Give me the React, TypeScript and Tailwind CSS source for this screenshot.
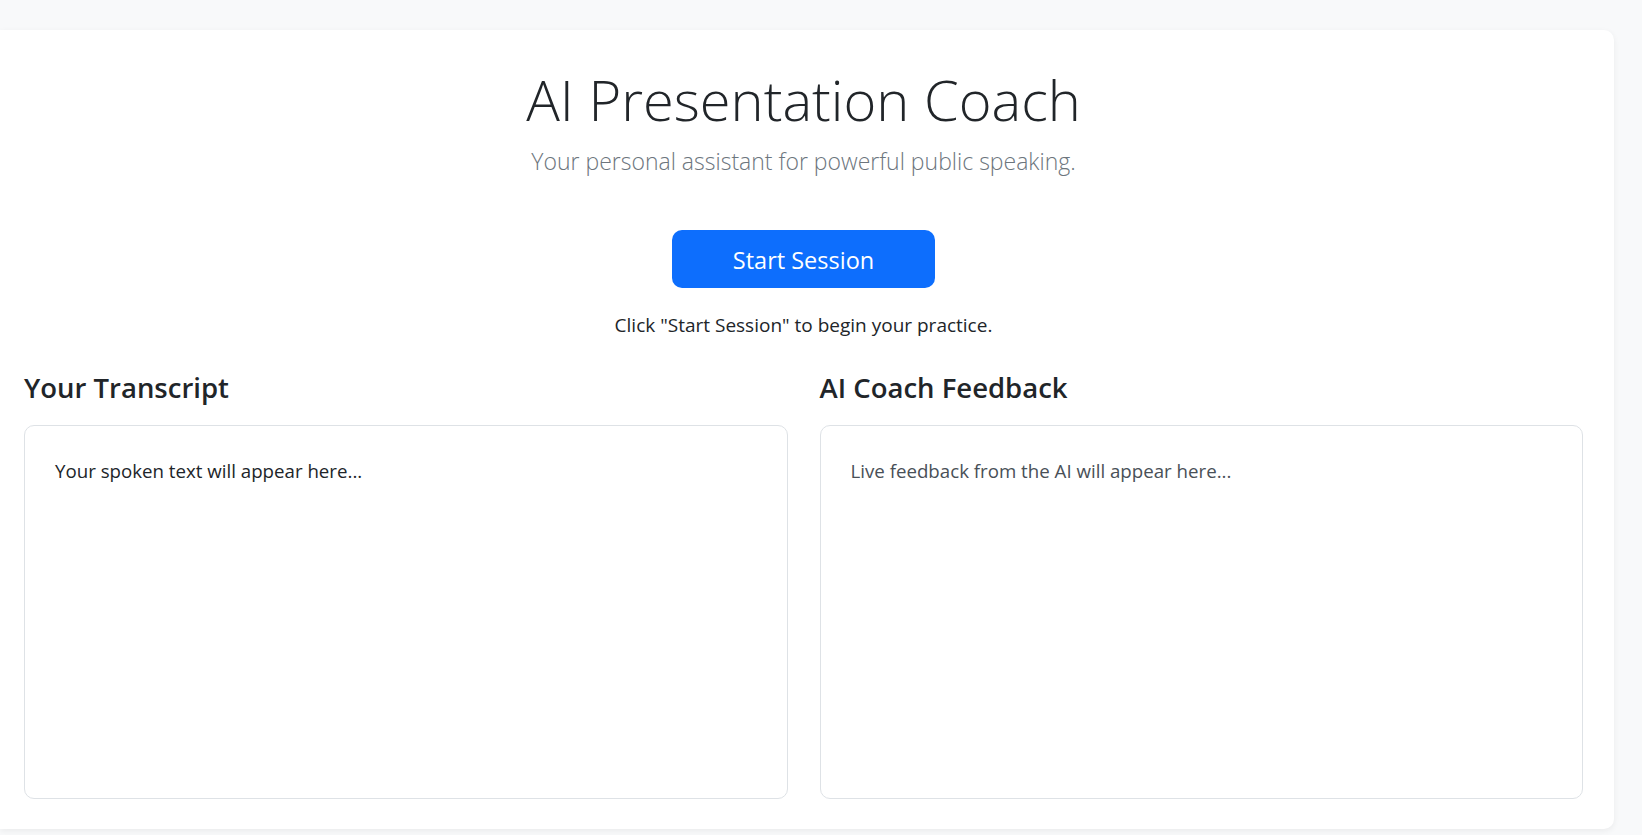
import React from 'react';

const App = () => {
  return (
    <div className="min-h-screen bg-[#f8f9fa] pt-[30px] font-['Open_Sans',sans-serif] text-[#212529]">
      <div className="w-[1614px] rounded-r-[10px] bg-white pl-6 pr-[31px] pt-[33px] pb-[30px] shadow-[0_2px_6px_rgba(0,0,0,0.06)]">
        {/* Header */}
        <div className="text-center">
          <h1 className="text-[56px] font-light leading-[72px]">AI Presentation Coach</h1>
          <p className="mt-2 text-[23px] font-light leading-[37px] text-[#6c757d]">
            Your personal assistant for powerful public speaking.
          </p>
          <button className="mt-[50px] h-[58px] w-[263px] rounded-[10px] bg-[#0d6efd] pt-[3px] text-[23.5px] text-white">
            Start Session
          </button>
          <p className="mt-[22px] text-[19px] leading-[30px]">Click "Start Session" to begin your practice.</p>
        </div>

        {/* Panels */}
        <div className="mt-[31px] grid grid-cols-2 gap-8">
          <div>
            <h3 className="mb-[21px] text-[27.5px] font-semibold leading-[1.2]">Your Transcript</h3>
            <div className="h-[374px] rounded-[10px] border border-[#dee2e6] p-[30px] text-[18.7px] leading-[30px]">
              Your spoken text will appear here...
            </div>
          </div>
          <div>
            <h3 className="mb-[21px] text-[27.5px] font-semibold leading-[1.2]">AI Coach Feedback</h3>
            <div className="h-[374px] rounded-[10px] border border-[#dee2e6] p-[30px] text-[18.7px] leading-[30px] text-[#495057]">
              Live feedback from the AI will appear here...
            </div>
          </div>
        </div>
      </div>
    </div>
  );
};

export default App;
